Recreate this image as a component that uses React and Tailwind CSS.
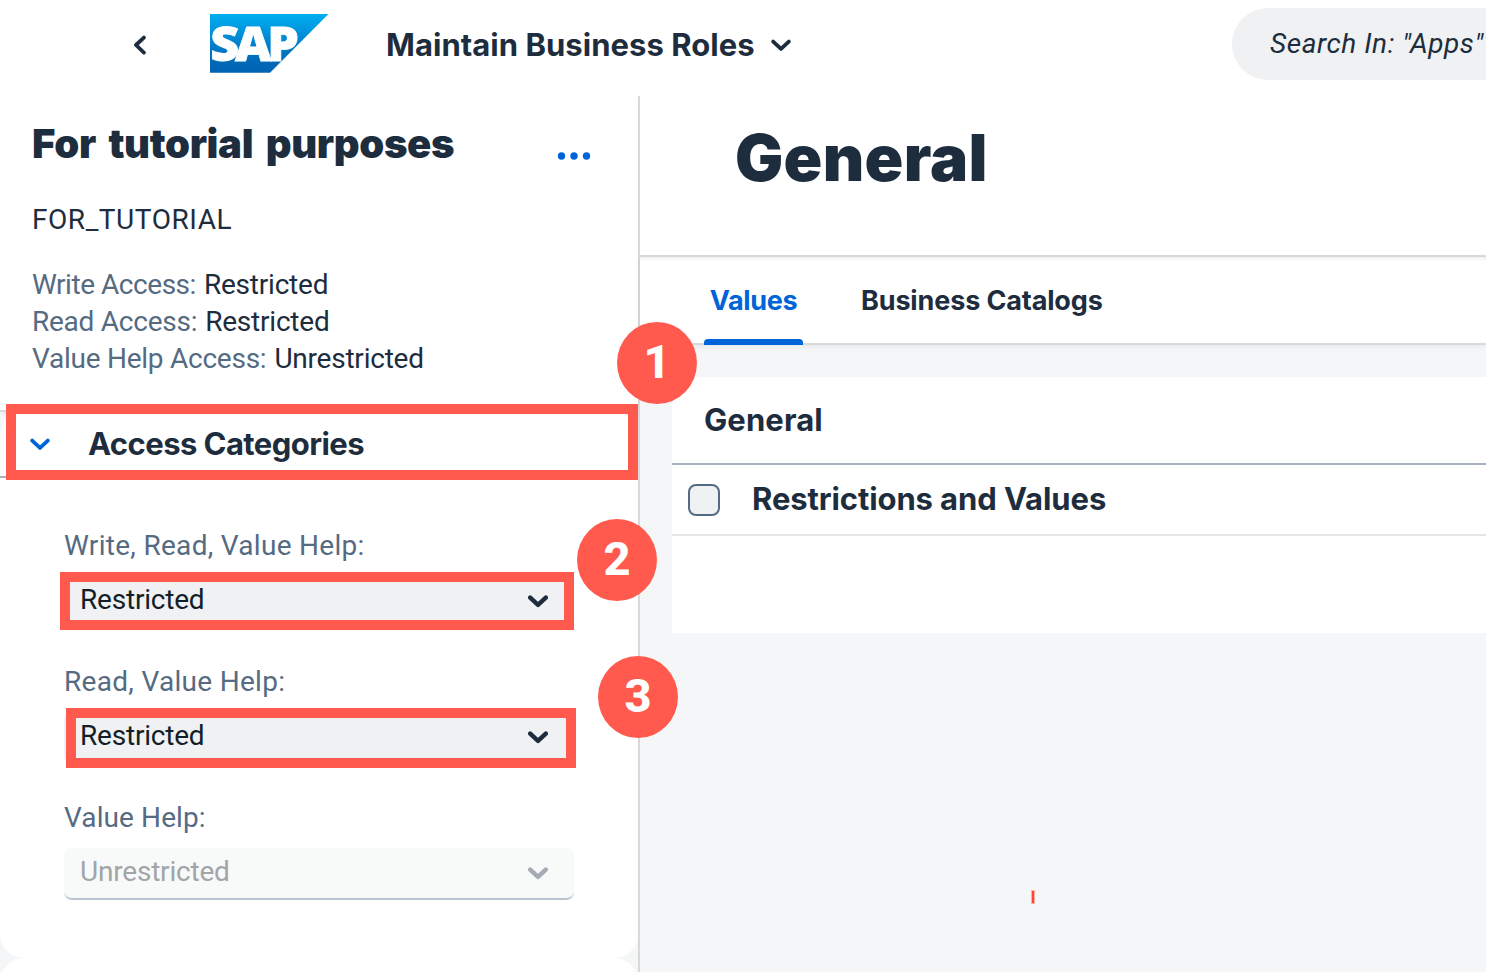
import React from "react";

function Chevron({ className, weight = 4.4 }) {
  return (
    <svg className={className} width="20" height="13" viewBox="0 0 20 13" fill="none" stroke="currentColor" strokeWidth={weight} strokeLinecap="round" strokeLinejoin="round">
      <path d="M2.2 2.6 10 9.9l7.8-7.3" />
    </svg>
  );
}

function SapLogo() {
  return (
    <svg className="mt-3.5 ml-[62px] shrink-0 self-start" width="119" height="59" viewBox="0 0 119 59">
      <defs>
        <linearGradient id="sapBlue" x1="0" y1="0" x2="0" y2="1">
          <stop offset="0" stopColor="#00aeef" />
          <stop offset="0.25" stopColor="#0099df" />
          <stop offset="0.55" stopColor="#007cc8" />
          <stop offset="0.85" stopColor="#0067b6" />
          <stop offset="1" stopColor="#0062b2" />
        </linearGradient>
      </defs>
      <path d="M0 0h118.5L60 58.7H0z" fill="url(#sapBlue)" />
      <text className="font-['Noto_Sans'] font-black tracking-[-4px]" transform="translate(0.3 46.6) scale(1.045 1)" fill="#fff" stroke="#fff" strokeWidth="0.8" fontSize="48">SAP</text>
    </svg>
  );
}

function ShellHeader() {
  return (
    <header className="flex h-24 shrink-0 items-center bg-white">
      <svg className="mb-[6px] ml-[133px] shrink-0" width="15" height="20" viewBox="0 0 15 20" fill="none" stroke="#1d2d3e" strokeWidth="3.8" strokeLinecap="round" strokeLinejoin="round">
        <path d="M10.9 2.6 3 10l7.9 7.6" />
      </svg>
      <SapLogo />
      <div className="mb-[6px] ml-[57px] flex items-center">
        <span className="w-[384px] font-[Inter] text-[31px] leading-10 font-bold tracking-[0.04px] whitespace-nowrap">Maintain Business Roles</span>
        <Chevron weight={3.8} className="mt-px ml-px" />
      </div>
      <div className="mb-2 ml-auto flex h-[72px] w-[254px] items-center rounded-l-full bg-[#eff1f2] pl-[38px]">
        <span className="text-[28px] leading-9 tracking-[0.55px] whitespace-nowrap italic">Search In: "Apps"</span>
      </div>
    </header>
  );
}

function Access({ label, value, tracking }) {
  return (
    <p className="flex gap-2 whitespace-nowrap">
      <span className={`${tracking} text-[#556b82]`}>{label}</span>
      <span className="tracking-[-0.22px]">{value}</span>
    </p>
  );
}

function Field({ label, value, disabled, tracking }) {
  return (
    <div className="flex h-[136px] flex-col">
      <span className={`${tracking} mb-3 text-[28px] leading-9 whitespace-nowrap text-[#556b82]`}>{label}</span>
      <div
        className={
          disabled
            ? "flex h-[52px] items-center justify-between rounded-lg border-b-2 border-[#b8c4cf] bg-[#f8faf9] pt-0.5 pr-[26px] pl-4 text-[#a1a5a8]"
            : "flex h-[52px] items-center justify-between rounded-lg bg-[#eff1f2] pr-[26px] pl-4 text-[#131e29]"
        }
      >
        <span className="mb-[5px] text-[28px] leading-9 tracking-[-0.2px]">{value}</span>
        <Chevron className={disabled ? "mb-px text-[#a4abb2]" : "mb-px text-[#1d2d3e]"} />
      </div>
    </div>
  );
}

function Sidebar() {
  return (
    <aside className="flex w-[640px] shrink-0 flex-col border-r-2 border-[#d9d9d9] bg-[#f5f6f7]">
      <div className="h-[316px] shrink-0 border-b-2 border-[#d9d9d9] bg-white pt-6 pl-8 shadow-[0_5px_5px_-3px_rgba(0,0,0,0.1)]">
        <div className="flex items-center justify-between pr-[47px]">
          <h2 className="font-[Inter] text-[40px] leading-[48px] font-black tracking-[-0.35px] whitespace-nowrap [word-spacing:5px]">For tutorial purposes</h2>
          <svg className="mt-6" width="34" height="8" viewBox="0 0 34 8" fill="#0064d9">
            <circle cx="4.5" cy="4" r="3.7" />
            <circle cx="17" cy="4" r="3.7" />
            <circle cx="29.5" cy="4" r="3.7" />
          </svg>
        </div>
        <p className="mt-[33px] text-[28px] leading-[37px] tracking-[0.55px]">FOR_TUTORIAL</p>
        <div className="mt-7 text-[28px] leading-[37px]">
          <Access label="Write Access:" value="Restricted" tracking="tracking-[-0.46px]" />
          <Access label="Read Access:" value="Restricted" tracking="tracking-[-0.25px]" />
          <Access label="Value Help Access:" value="Unrestricted" tracking="tracking-[-0.25px]" />
        </div>
      </div>
      <section className="h-[546px] shrink-0 rounded-3xl bg-white">
        <div className="flex h-[66px] items-center border-b-2 border-[#a8b3bd] pl-[30px]">
          <Chevron weight={3.8} className="text-[#0064d9]" />
          <h3 className="ml-[38px] font-[Inter] text-[31px] leading-10 font-bold tracking-[-0.56px]">Access Categories</h3>
        </div>
        <div className="mt-[50px] ml-16 w-[510px]">
          <Field label="Write, Read, Value Help:" value="Restricted" tracking="tracking-[0.3px]" />
          <Field label="Read, Value Help:" value="Restricted" tracking="tracking-[0.3px]" />
          <Field label="Value Help:" value="Unrestricted" tracking="tracking-[0.1px]" disabled />
        </div>
      </section>
      <section className="h-14 shrink-0 rounded-t-3xl bg-white" />
    </aside>
  );
}

function Detail() {
  return (
    <main className="flex min-w-0 flex-1 flex-col bg-[#f5f6f7]">
      <div className="h-[161px] shrink-0 border-b-2 border-[#d9d9d9] bg-white pt-[22px] pl-[95px]">
        <h1 className="font-[Inter] text-[64px] leading-[80px] font-black tracking-[0.3px]">General</h1>
      </div>
      <nav className="flex h-[88px] shrink-0 gap-[50px] border-b-2 border-[#d9d9d9] bg-white pl-16 font-[Inter] text-[27px] leading-9 font-bold shadow-[inset_0_4px_5px_-3px_rgba(0,0,0,0.09),0_2px_5px_rgba(0,0,0,0.06)]">
        <div className="-mb-0.5 flex w-[99px] flex-col items-center text-[#0064d9]">
          <span className="mt-[26px] mb-auto tracking-[-0.35px]">Values</span>
          <span className="h-1.5 w-full rounded-t-[4px] bg-[#0064d9]" />
        </div>
        <span className="mt-[26px] ml-2 tracking-[-0.14px] whitespace-nowrap">Business Catalogs</span>
      </nav>
      <section className="mt-8 ml-8 h-64 bg-white">
        <h2 className="flex h-[88px] items-center border-b-2 border-[#a8b3bd] pl-8 font-[Inter] text-[31px] leading-10 font-bold tracking-[0.1px]">General</h2>
        <div className="flex h-[71px] items-center gap-8 border-b-2 border-[#e5e5e5] pl-4">
          <span className="mt-px size-8 rounded-lg border-2 border-[#556b82] bg-[#eff1f2]" />
          <span className="mb-0.5 font-[Inter] text-[31px] leading-10 font-bold tracking-[-0.1px] whitespace-nowrap">Restrictions and Values</span>
        </div>
      </section>
    </main>
  );
}

const badge = "absolute flex h-[82px] w-20 items-center justify-center rounded-[50%] bg-[#ff5a4d] pb-1 text-[47px] leading-none font-extrabold text-white";

// Numbered callouts lie on top of the page.
function Callouts() {
  return (
    <>
      <div className="absolute top-[404px] left-[6px] h-[76px] w-[632px] border-10 border-[#ff5a4d]" />
      <div className="absolute top-[572px] left-[60px] h-[58px] w-[514px] border-10 border-[#ff5a4d]" />
      <div className="absolute top-[708px] left-[66px] h-[60px] w-[510px] border-10 border-[#ff5a4d]" />
      <div className="absolute top-[890px] left-[1031px] h-[14px] w-1 border border-[#ffb0a9] bg-[#ff4433]" />
      <div className={`${badge} top-[322px] left-[617px]`}>1</div>
      <div className={`${badge} top-[519px] left-[577px]`}>2</div>
      <div className={`${badge} top-[656px] left-[598px]`}>3</div>
    </>
  );
}

export default function App() {
  return (
    <div className="relative flex h-[972px] w-[1486px] flex-col overflow-hidden bg-white font-[Roboto,'Noto_Sans',sans-serif] text-[#1d2d3e]">
      <ShellHeader />
      <div className="flex min-h-0 flex-1">
        <Sidebar />
        <Detail />
      </div>
      <Callouts />
    </div>
  );
}
